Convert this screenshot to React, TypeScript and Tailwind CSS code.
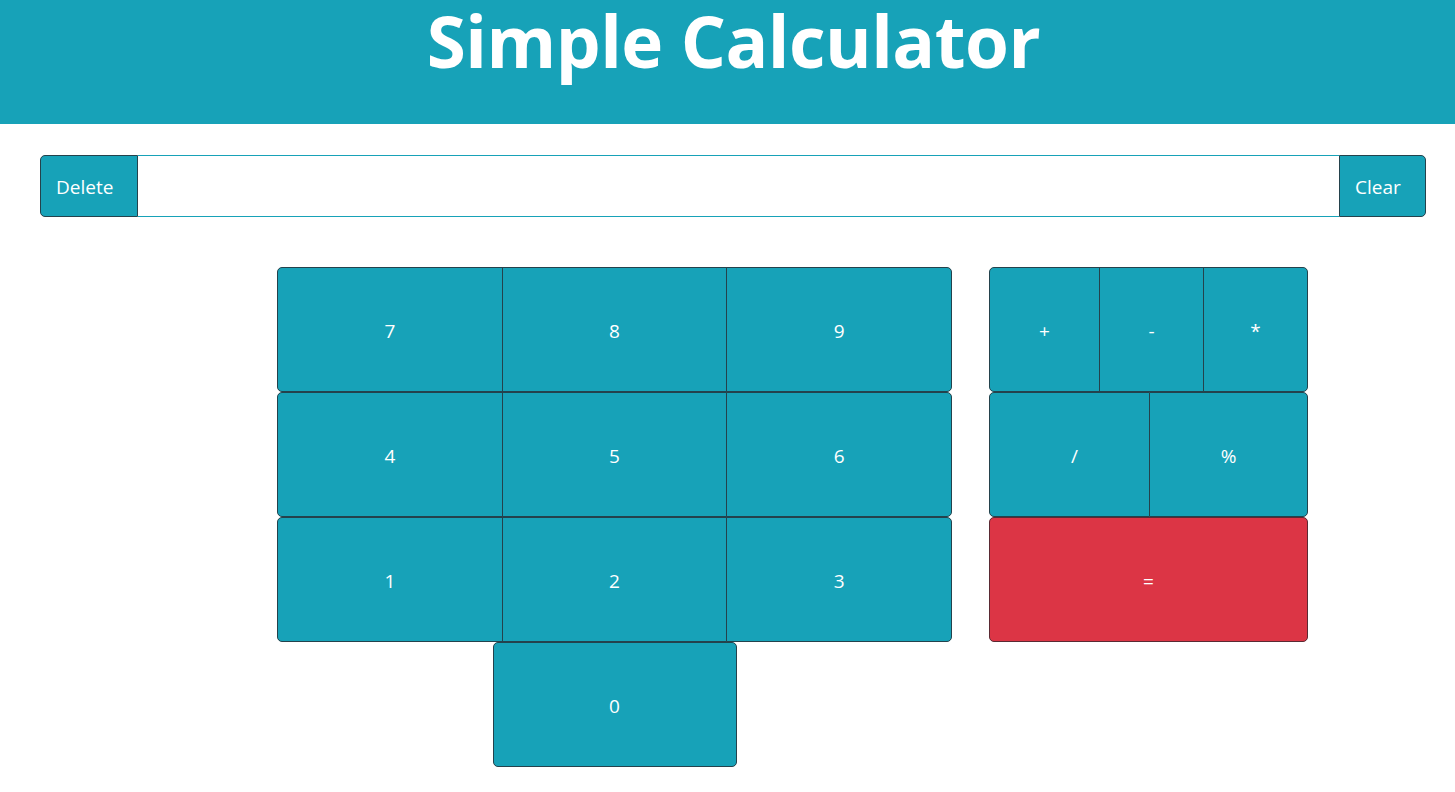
import React, { useState } from 'react';

const font = { fontFamily: '"Segoe UI", "Open Sans", "Noto Sans", sans-serif' };

const Key = ({ label, className = '', onClick }: { label: string; className?: string; onClick?: () => void }) => (
    <button
        onClick={onClick}
        className={`h-[125px] flex items-center justify-center pt-[3px] text-white text-[19px] bg-[#17a2b8] border border-[#24424c] ${className}`}
    >
        {label}
    </button>
);

const App: React.FC = () => {
    const [value, setValue] = useState('');
    const push = (s: string) => setValue(v => v + s);
    const evaluate = () => {
        try {
            // eslint-disable-next-line no-new-func
            setValue(String(Function(`return (${value})`)()));
        } catch {
            setValue('');
        }
    };

    const rows = [['7', '8', '9'], ['4', '5', '6'], ['1', '2', '3']];

    return (
        <div className="min-h-screen bg-white" style={font}>
            <header className="h-[124px] bg-[#17a2b8] flex justify-center">
                <h1 className="text-white font-bold text-[71px] leading-[1.15] tracking-[-0.5px] pl-[12px]">Simple Calculator</h1>
            </header>

            <div className="pt-[31px] pl-[40px] pr-[29px]">
                <div className="flex h-[62px]">
                    <button
                        onClick={() => setValue(v => v.slice(0, -1))}
                        className="w-[98px] text-left pl-[15px] pt-[3px] text-white text-[19px] bg-[#17a2b8] border border-[#24424c] rounded-l-[5px]"
                    >
                        Delete
                    </button>
                    <input
                        value={value}
                        onChange={e => setValue(e.target.value)}
                        className="flex-1 border-y border-[#17a2b8] outline-none px-3 text-[19px]"
                    />
                    <button
                        onClick={() => setValue('')}
                        className="w-[87px] text-left pl-[15px] pt-[3px] text-white text-[19px] bg-[#17a2b8] border border-[#24424c] rounded-r-[5px]"
                    >
                        Clear
                    </button>
                </div>
            </div>

            <div className="flex pl-[277px] pt-[50px] gap-[37px]">
                <div className="w-[675px] flex flex-col">
                    {rows.map(row => (
                        <div key={row.join('')} className="flex">
                            {row.map((d, i) => (
                                <Key
                                    key={d}
                                    label={d}
                                    onClick={() => push(d)}
                                    className={`flex-1 ${i === 0 ? 'rounded-l-[5px]' : '-ml-px'} ${i === 2 ? 'rounded-r-[5px]' : ''}`}
                                />
                            ))}
                        </div>
                    ))}
                    <div className="flex justify-center">
                        <Key label="0" onClick={() => push('0')} className="w-[244px] rounded-[5px]" />
                    </div>
                </div>

                <div className="w-[319px] flex flex-col">
                    <div className="flex">
                        <Key label="+" onClick={() => push('+')} className="w-[111px] rounded-l-[5px]" />
                        <Key label="-" onClick={() => push('-')} className="w-[105px] -ml-px" />
                        <Key label="*" onClick={() => push('*')} className="w-[105px] -ml-px rounded-r-[5px]" />
                    </div>
                    <div className="flex">
                        <Key label="/" onClick={() => push('/')} className="w-[161px] pl-[10px] rounded-l-[5px]" />
                        <Key label="%" onClick={() => push('%')} className="w-[159px] -ml-px rounded-r-[5px]" />
                    </div>
                    <button
                        onClick={evaluate}
                        className="h-[125px] flex items-center justify-center pt-[3px] text-white text-[19px] bg-[#dc3545] border border-[#5a2a33] rounded-[5px]"
                    >
                        =
                    </button>
                </div>
            </div>
        </div>
    );
};

export default App;
